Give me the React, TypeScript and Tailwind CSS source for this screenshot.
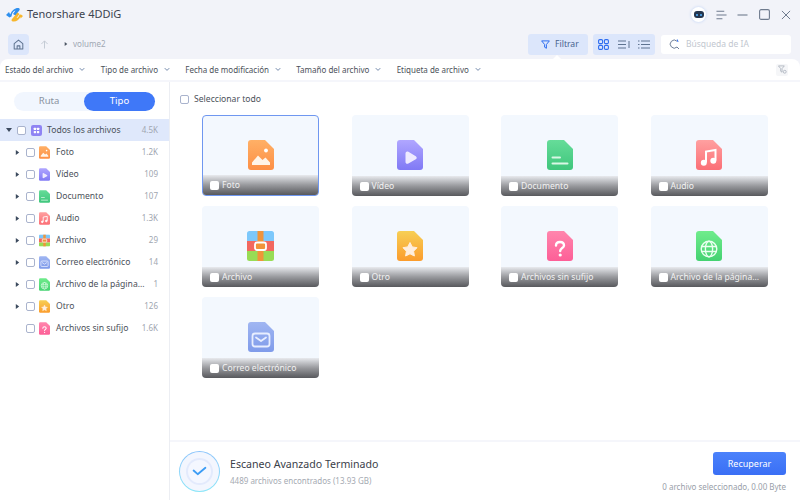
import React from "react";

type Kind = "foto" | "video" | "doc" | "audio" | "zip" | "otro" | "q" | "web" | "mail" | "all";

const grads: Record<string, [string, string]> = {
  foto: ["#ffb066", "#fd8f45"],
  video: ["#b0a6ff", "#8079f5"],
  doc: ["#66dc99", "#3fc67c"],
  audio: ["#ffa0a0", "#fb6f76"],
  otro: ["#f7cf55", "#fb9c2c"],
  q: ["#ff86ad", "#fd5f97"],
  web: ["#70ec8c", "#44d271"],
  mail: ["#a0b6f2", "#7f9bea"],
};

function FileIcon({ kind, className, uid }: { kind: Kind; className: string; uid: string }) {
  if (kind === "all") {
    return (
      <svg viewBox="0 0 26 26" className={className}>
        <rect width="26" height="26" rx="5" fill="#8f84f3" />
        <g fill="#fff">
          <rect x="6.5" y="6.5" width="5.5" height="5.5" rx="1" />
          <rect x="14" y="6.5" width="5.5" height="5.5" rx="1" />
          <rect x="6.5" y="14" width="5.5" height="5.5" rx="1" />
          <rect x="14" y="14" width="5.5" height="5.5" rx="1" />
        </g>
      </svg>
    );
  }
  if (kind === "zip") {
    return (
      <svg viewBox="0 0 27 30" className={className}>
        <defs>
          <clipPath id={`zipclip-${uid}`}>
            <rect width="27" height="30" rx="2.5" />
          </clipPath>
        </defs>
        <g clipPath={`url(#zipclip-${uid})`}>
          <rect width="27" height="10" fill="#7cc8fb" />
          <rect y="10" width="27" height="10" fill="#f2685f" />
          <rect y="20" width="27" height="10" fill="#98dc55" />
          <rect x="10.5" width="6" height="30" fill="#f0943a" />
        </g>
        <rect x="8" y="11.5" width="11" height="7.5" rx="2" fill="#f0943a" stroke="#fff" strokeWidth="1.8" />
      </svg>
    );
  }
  const [a, b] = grads[kind];
  const id = `grad-${kind}-${uid}`;
  return (
    <svg viewBox="0 0 26 30" className={className}>
      <defs>
        <linearGradient id={id} x1="0" y1="0" x2="0" y2="1">
          <stop offset="0" stopColor={a} />
          <stop offset="1" stopColor={b} />
        </linearGradient>
      </defs>
      <path d="M3 0H17L26 9V27A3 3 0 0 1 23 30H3A3 3 0 0 1 0 27V3A3 3 0 0 1 3 0Z" fill={`url(#${id})`} />
      {kind === "foto" && (
        <g fill="#fff">
          <circle cx="18" cy="10.5" r="1.9" />
          <path d="M4 25V22.5L10 15.5L14.5 20L17.5 17.5L22 22.5V25Z" fill="#fff4e8" />
        </g>
      )}
      {kind === "video" && <path d="M8.5 13.5C8.5 11.8 10 11 11.4 11.8L18.8 16.2C20 17 20 18.5 18.8 19.3L11.4 23.5C10 24.3 8.5 23.5 8.5 22Z" fill="#eeeaff" />}
      {kind === "doc" && (
        <g fill="#d9f7e5">
          <rect x="4.5" y="16.5" width="9.5" height="2" rx="1" />
          <rect x="4.5" y="22.5" width="17" height="2" rx="1" />
        </g>
      )}
      {kind === "audio" && (
        <g fill="none" stroke="#fff" strokeWidth="2">
          <path d="M10 22.5V11.5L19.5 10V20.5" />
          <circle cx="7.8" cy="22.8" r="2" fill="#fff" />
          <circle cx="17.3" cy="20.8" r="2" fill="#fff" />
        </g>
      )}
      {kind === "otro" && <path d="M13 11.5L15.3 15.9L20 16.7L16.6 20.2L17.4 25L13 22.8L8.6 25L9.4 20.2L6 16.7L10.7 15.9Z" fill="#ffeedd" stroke="#ffeedd" strokeWidth="1" strokeLinejoin="round" />}
      {kind === "q" && (
        <g>
          <path d="M9 14.5C9 12 11 11 13 11C15.2 11 17 12.2 17 14.5C17 17 13.2 17.2 13.2 20" fill="none" stroke="#fff" strokeWidth="2.4" strokeLinecap="round" />
          <circle cx="13.2" cy="24" r="1.6" fill="#fff" />
        </g>
      )}
      {kind === "web" && (
        <g fill="none" stroke="#eafff0" strokeWidth="1.4">
          <circle cx="13" cy="18" r="7.8" />
          <ellipse cx="13" cy="18" rx="3.6" ry="7.8" />
          <path d="M5.5 15.5H20.5M5.5 20.5H20.5" />
        </g>
      )}
      {kind === "mail" && (
        <g fill="none" stroke="#e8eeff" strokeWidth="1.8" strokeLinejoin="round">
          <rect x="4.5" y="11.5" width="17" height="13" rx="2.5" />
          <path d="M8 15.5L13 19L18 15.5" strokeLinecap="round" />
        </g>
      )}
    </svg>
  );
}

const tree: { kind: Kind; label: string; n: string; arrow: boolean }[] = [
  { kind: "foto", label: "Foto", n: "1.2K", arrow: true },
  { kind: "video", label: "Vídeo", n: "109", arrow: true },
  { kind: "doc", label: "Documento", n: "107", arrow: true },
  { kind: "audio", label: "Audio", n: "1.3K", arrow: true },
  { kind: "zip", label: "Archivo", n: "29", arrow: true },
  { kind: "mail", label: "Correo electrónico", n: "14", arrow: true },
  { kind: "web", label: "Archivo de la página...", n: "1", arrow: true },
  { kind: "otro", label: "Otro", n: "126", arrow: true },
  { kind: "q", label: "Archivos sin sufijo", n: "1.6K", arrow: false },
];

const cards: { kind: Kind; label: string; sel?: boolean }[] = [
  { kind: "foto", label: "Foto", sel: true },
  { kind: "video", label: "Vídeo" },
  { kind: "doc", label: "Documento" },
  { kind: "audio", label: "Audio" },
  { kind: "zip", label: "Archivo" },
  { kind: "otro", label: "Otro" },
  { kind: "q", label: "Archivos sin sufijo" },
  { kind: "web", label: "Archivo de la página..." },
  { kind: "mail", label: "Correo electrónico" },
];

const filters = ["Estado del archivo", "Tipo de archivo", "Fecha de modificación", "Tamaño del archivo", "Etiqueta de archivo"];

function Chevron() {
  return (
    <svg viewBox="0 0 8 6" className="w-[6px] h-[5px]">
      <path d="M1 1.2L4 4.2L7 1.2" fill="none" stroke="#6d84a8" strokeWidth="1.3" />
    </svg>
  );
}

export default function App() {
  return (
    <div className="w-[800px] h-[500px] overflow-hidden flex flex-col bg-[#f2f3f9] text-[#3f4650] text-[8.6px] font-['Noto_Sans','Liberation_Sans',sans-serif]">
      {/* Title bar */}
      <div className="h-[29px] shrink-0 flex items-center pl-[6px] pr-[9px]">
        <svg viewBox="0 0 17 15" className="w-[17px] h-[15px]">
          <path d="M0 8L3 5L4.2 7.6C5.8 3 9.5 0.6 12.5 1C13.5 1.2 14 2 13.6 3L9.5 8.5L7 7L9.5 3.6C7.5 3.8 6 6 5.5 9.5L3.5 10.5Z" fill="#2f8fee" />
          <path d="M11.5 5.5L13.5 7L10.5 11C12 11 13 9.5 13.4 7.8L15 7.6L17 9L14.6 11.5L14.4 10C13 13 10 15 7 14.5C5.6 14.2 5.2 13.2 5.8 12.2Z" fill="#f7b62c" />
        </svg>
        <span className="ml-[4px] text-[11px] text-[#3d4450]">Tenorshare 4DDiG</span>
        <div className="ml-auto flex items-center">
          <div className="w-[15px] h-[15px] rounded-full bg-white shadow-[0_0_3px_#bcd0f5] flex items-center justify-center">
            <div className="w-[10px] h-[7px] rounded-[3px] bg-[#25364f] flex items-center justify-center gap-[2px]">
              <span className="w-[2px] h-[2px] rounded-full bg-[#55b4ff]" />
              <span className="w-[2px] h-[2px] rounded-full bg-[#55b4ff]" />
            </div>
          </div>
          <svg viewBox="0 0 12 10" className="w-[11px] h-[10px] ml-[10px]" fill="none" stroke="#6f7b8e" strokeWidth="1.1">
            <path d="M0.5 1H9M0.5 5H11.5M0.5 9H7" />
          </svg>
          <svg viewBox="0 0 11 10" className="w-[11px] h-[10px] ml-[10px]" fill="none" stroke="#6f7b8e" strokeWidth="1.1">
            <path d="M0.5 5H10.5" />
          </svg>
          <svg viewBox="0 0 11 11" className="w-[11px] h-[11px] ml-[11px]" fill="none" stroke="#6f7b8e" strokeWidth="1.1">
            <rect x="0.6" y="0.6" width="9.8" height="9.8" rx="1.5" />
          </svg>
          <svg viewBox="0 0 11 11" className="w-[10px] h-[10px] ml-[11px]" fill="none" stroke="#6f7b8e" strokeWidth="1.1">
            <path d="M1 1L10 10M10 1L1 10" />
          </svg>
        </div>
      </div>

      {/* Toolbar */}
      <div className="h-[30px] shrink-0 flex items-center pl-[8px] pr-[9px]">
        <div className="w-[21px] h-[21px] rounded-[4px] bg-[#dce6fb] flex items-center justify-center">
          <svg viewBox="0 0 12 12" className="w-[11px] h-[11px]" fill="none" stroke="#5e7390" strokeWidth="1.1" strokeLinejoin="round">
            <path d="M1.3 5L6 1.2L10.7 5V10.8H1.3Z" />
            <path d="M4.5 10.8V7.5H7.5V10.8" />
          </svg>
        </div>
        <svg viewBox="0 0 10 10" className="w-[9px] h-[9px] ml-[11px]" fill="none" stroke="#c3cad5" strokeWidth="1.1">
          <path d="M5 9.5V1M1.5 4.5L5 1L8.5 4.5" />
        </svg>
        <svg viewBox="0 0 6 6" className="w-[4px] h-[4px] ml-[15px]">
          <path d="M1 0L5 3L1 6Z" fill="#4b5563" />
        </svg>
        <span className="ml-[5px] text-[#a1a8b3] text-[8px]">volume2</span>
        <div className="relative ml-auto w-[60px] h-[21px] rounded-[3px] bg-[#dce6fb] flex items-center pl-[13px] gap-[5px] text-[#48628e]">
          <svg viewBox="0 0 10 10" className="w-[9px] h-[9px]" fill="none" stroke="#2d6cf0" strokeWidth="1.1" strokeLinejoin="round">
            <path d="M0.7 1H9.3L6 5V9.2L4 8V5Z" />
          </svg>
          <span>Filtrar</span>
          <span className="absolute left-[23px] -bottom-[6px] w-0 h-0 border-x-[6px] border-x-transparent border-b-[6px] border-b-white" />
        </div>
        <div className="ml-[5px] w-[62px] h-[21px] rounded-[3px] bg-[#dce6fb] flex items-center justify-between px-[5px]">
          <svg viewBox="0 0 11 11" className="w-[11px] h-[11px]" fill="none" stroke="#2d6cf0" strokeWidth="1.1">
            <rect x="0.6" y="0.6" width="4" height="4" rx="1.2" />
            <rect x="6.4" y="0.6" width="4" height="4" rx="1.2" />
            <rect x="0.6" y="6.4" width="4" height="4" rx="1.2" />
            <rect x="6.4" y="6.4" width="4" height="4" rx="1.2" />
          </svg>
          <svg viewBox="0 0 12 9" className="w-[12px] h-[9px]" fill="none" stroke="#5e7390" strokeWidth="1">
            <path d="M0 1H8M0 4.5H8M0 8H8M11 1V8" />
          </svg>
          <svg viewBox="0 0 12 9" className="w-[12px] h-[9px]" fill="none" stroke="#5e7390" strokeWidth="1">
            <path d="M3 1H12M3 4.5H12M3 8H12M0 1H1.5M0 4.5H1.5M0 8H1.5" />
          </svg>
        </div>
        <div className="ml-[6px] w-[130px] h-[19px] rounded-[3px] bg-white flex items-center pl-[8px]">
          <svg viewBox="0 0 11 11" className="w-[11px] h-[11px]" fill="none" stroke="#6f7f98" strokeWidth="1">
            <path d="M8 2.2A4 4 0 1 0 8 8L10 10" />
            <path d="M8.3 0.5L9 3" stroke="#2d6cf0" />
          </svg>
          <span className="ml-[6px] text-[#c2c7cf] text-[8.5px]">Búsqueda de IA</span>
        </div>
      </div>

      {/* Main panel */}
      <div className="flex-1 min-h-0 bg-white rounded-t-[8px] flex flex-col">
        <div className="h-[23px] shrink-0 flex items-center justify-between pl-[5px] pr-[12px] border-b-2 border-[#f5f6fb] text-[#4b5159] text-[8px]">
          <div className="flex items-center">
            {filters.map((f) => (
              <div key={f} className="flex items-center gap-[6px] mr-[15.3px]">
                <span>{f}</span>
                <Chevron />
              </div>
            ))}
          </div>
          <div className="w-[12px] h-[12px] rounded-[2px] bg-[#f5f6f8] flex items-center justify-center">
            <svg viewBox="0 0 10 10" className="w-[9px] h-[9px]" fill="none" stroke="#aab1bc" strokeWidth="0.9">
              <path d="M0.5 1H7L4.5 4V8L3 7V4Z" />
              <circle cx="7.5" cy="7.5" r="1.6" />
            </svg>
          </div>
        </div>

        <div className="flex-1 min-h-0 flex">
          {/* Sidebar */}
          <div className="w-[170px] shrink-0 border-r border-[#eceef3] flex flex-col">
            <div className="mx-[14px] mt-[10px] h-[19px] rounded-full bg-[#f1f6fe] flex text-[9.5px]">
              <div className="w-[70px] flex items-center justify-center text-[#8a929e]">Ruta</div>
              <div className="flex-1 rounded-full bg-[#3f78f8] flex items-center justify-center text-white">Tipo</div>
            </div>
            <div className="mt-[8px] h-[22px] bg-[#dfe8fb] flex items-center pl-[6px] pr-[11px]">
              <svg viewBox="0 0 6 6" className="w-[6px] h-[6px] shrink-0">
                <path d="M0 1H6L3 5Z" fill="#3c4a5e" />
              </svg>
              <span className="ml-[5px] w-[9px] h-[9px] rounded-[2px] border border-[#a9b3cd] bg-white shrink-0" />
              <FileIcon kind="all" uid="tree" className="w-[11px] h-[11px] ml-[5px] shrink-0" />
              <span className="ml-[5px] text-[#4b5159]">Todos los archivos</span>
              <span className="ml-auto text-[#a0a6b0] text-[8px]">4.5K</span>
            </div>
            {tree.map((t) => (
              <div key={t.label} className="h-[22px] flex items-center pl-[15px] pr-[11px]">
                {t.arrow ? (
                  <svg viewBox="0 0 6 6" className="w-[5px] h-[5px] shrink-0">
                    <path d="M1 0L5 3L1 6Z" fill="#3c4a5e" />
                  </svg>
                ) : (
                  <span className="w-[5px] shrink-0" />
                )}
                <span className="ml-[6px] w-[9px] h-[9px] rounded-[2px] border border-[#a9b3cd] bg-white shrink-0" />
                <span className="ml-[3px] w-[12px] h-[13px] flex items-center justify-center shrink-0">
                  <FileIcon kind={t.kind} uid="tree" className="w-[11px] h-[13px]" />
                </span>
                <span className="ml-[6px] whitespace-nowrap text-[#4b5159]">{t.label}</span>
                <span className="ml-auto text-[#a0a6b0] text-[8px]">{t.n}</span>
              </div>
            ))}
          </div>

          {/* Content */}
          <div className="flex-1 min-w-0 flex flex-col">
            <div className="h-[33px] shrink-0 flex items-center pl-[10px] pt-[2px] text-[#4b5159]">
              <span className="w-[9px] h-[9px] rounded-[2px] border border-[#a9b3cd] bg-white" />
              <span className="ml-[5px]">Seleccionar todo</span>
            </div>
            <div className="pl-[32px] grid grid-cols-[117px_117px_117px_117px] gap-x-[32.5px] gap-y-[10px]">
              {cards.map((c) => (
                <div
                  key={c.label}
                  className={`h-[81px] rounded-[4px] bg-[#f3f8fe] overflow-hidden flex flex-col ${c.sel ? "border border-[#6f97f0]" : ""}`}
                >
                  <div className={`flex-1 min-h-0 flex justify-center ${c.sel ? "pt-[24px]" : "pt-[25px]"}`}>
                    {c.kind === "zip" ? (
                      <FileIcon kind={c.kind} uid="card" className="w-[27px] h-[30px]" />
                    ) : (
                      <FileIcon kind={c.kind} uid="card" className="w-[26px] h-[30px]" />
                    )}
                  </div>
                  <div className={`h-[20px] shrink-0 bg-gradient-to-b from-[#e8eaee] via-[#98999d] to-[#58595d] flex items-center ${c.sel ? "pl-[7px]" : "pl-[8px]"}`}>
                    <span className="w-[9px] h-[9px] rounded-[2px] bg-white" />
                    <span className="ml-[3px] text-[#f2f2f2] text-[8.6px] leading-[11px] whitespace-nowrap">{c.label}</span>
                  </div>
                </div>
              ))}
            </div>

            {/* Bottom bar */}
            <div className="mt-auto h-[60px] shrink-0 border-t-2 border-[#f5f6fb] flex items-center pl-[9px] pr-[14px]">
              <div className="w-[41px] h-[41px] rounded-full bg-gradient-to-b from-[#8cc4fb] to-[#8ce6f8] p-[1px]">
                <div className="w-full h-full rounded-full bg-[#f3f6fe] flex items-center justify-center">
                  <div className="w-[27px] h-[27px] rounded-full bg-[#e3eafc] p-[2px]">
                    <div className="w-full h-full rounded-full bg-[#f4f7ff] flex items-center justify-center">
                      <svg viewBox="0 0 16 11" className="w-[15px] h-[10px]" fill="none" stroke="#3b9cf5" strokeWidth="2" strokeLinecap="round" strokeLinejoin="round">
                        <path d="M1.5 5L6 9L14.5 2" />
                      </svg>
                    </div>
                  </div>
                </div>
              </div>
              <div className="ml-[10px] flex flex-col">
                <span className="text-[10.6px] leading-[16px] text-[#3a4049]">Escaneo Avanzado Terminado</span>
                <span className="mt-[3px] text-[8px] leading-[12px] text-[#a5aab2]">4489 archivos encontrados (13.93 GB)</span>
              </div>
              <div className="ml-auto flex flex-col items-end mt-[2px]">
                <div className="w-[73px] h-[23px] rounded-[3px] bg-gradient-to-b from-[#4b82fb] to-[#3a6ff5] flex items-center justify-center text-white text-[9px]">
                  Recuperar
                </div>
                <span className="mt-[6px] text-[8px] leading-[11px] text-[#9aa0a9]">0 archivo seleccionado, 0.00 Byte</span>
              </div>
            </div>
          </div>
        </div>
      </div>
    </div>
  );
}
